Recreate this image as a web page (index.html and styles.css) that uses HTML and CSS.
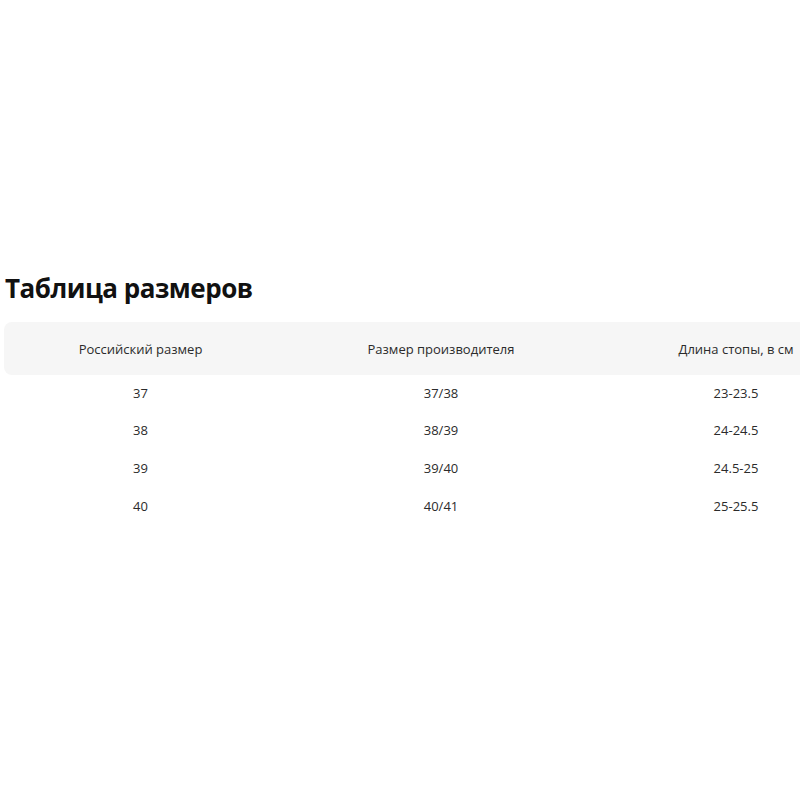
FILE: index.html
```html
<!DOCTYPE html>
<html lang="ru">
<head>
<meta charset="utf-8">
<title>Таблица размеров</title>
<link rel="stylesheet" href="styles.css">
</head>
<body>
<main class="page">
  <h1 class="title">Таблица размеров</h1>
  <div class="table-wrap">
    <div class="table">
      <div class="row head">
        <div class="cell">Российский размер</div>
        <div class="cell">Размер производителя</div>
        <div class="cell">Длина стопы, в см</div>
      </div>
      <div class="row">
        <div class="cell">37</div>
        <div class="cell">37/38</div>
        <div class="cell">23-23.5</div>
      </div>
      <div class="row">
        <div class="cell">38</div>
        <div class="cell">38/39</div>
        <div class="cell">24-24.5</div>
      </div>
      <div class="row">
        <div class="cell">39</div>
        <div class="cell">39/40</div>
        <div class="cell">24.5-25</div>
      </div>
      <div class="row">
        <div class="cell">40</div>
        <div class="cell">40/41</div>
        <div class="cell">25-25.5</div>
      </div>
    </div>
  </div>
</main>
</body>
</html>
```

FILE: styles.css
```css
html, body {
  margin: 0;
  padding: 0;
  background: #ffffff;
  overflow: hidden;
}

.page {
  padding-top: 268px;
  padding-left: 4px;
  font-family: "Open Sans", "Noto Sans", sans-serif;
  color: #2b2b2b;
}

.title {
  margin: 0 0 14px 1px;
  font-size: 26px;
  line-height: 40px;
  font-weight: 700;
  letter-spacing: -0.5px;
  color: #111111;
}

.table-wrap {
  width: 796px;
  overflow: hidden;
}

.table {
  width: 880px;
}

.row {
  display: grid;
  grid-template-columns: 273px 328px 262px;
  height: 37.6px;
  align-items: center;
  font-size: 13px;
}

.row.head {
  height: 53px;
  background: #f6f6f6;
  border-radius: 8px;
}

.row:not(.head) .cell {
  padding-bottom: 2px;
}

.cell {
  text-align: center;
}
```
